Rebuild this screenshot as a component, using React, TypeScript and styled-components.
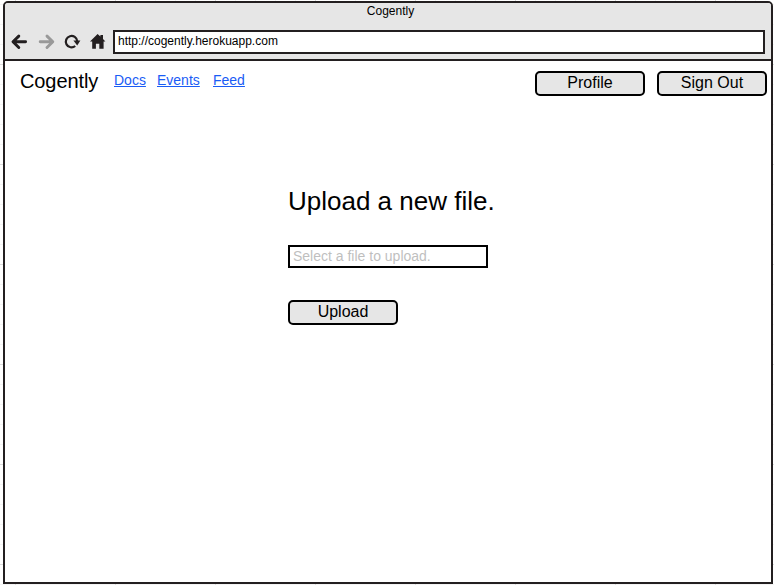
import React from "react";
import styled, { createGlobalStyle } from "styled-components";

const GlobalStyle = createGlobalStyle`
  * { box-sizing: border-box; }
  body {
    margin: 0;
    background: #fff;
    color: #000;
    font-family: "Liberation Sans", Arial, Helvetica, sans-serif;
    overflow: hidden;
  }
`;

const Canvas = styled.div`
  width: 774px;
  height: 585px;
  padding: 1px 1px 1px 3px;
  background-color: #fff;
  background-image:
    linear-gradient(90deg, #dcdcdc 1px, transparent 1px),
    linear-gradient(#dcdcdc 1px, transparent 1px),
    linear-gradient(90deg, #f4f4f4 1px, transparent 1px),
    linear-gradient(#f4f4f4 1px, transparent 1px);
  background-size: 100px 100px, 100px 100px, 20px 20px, 20px 20px;
  background-position: 15px 0, 0 64px, 15px 0, 0 4px;
`;

const BrowserWindow = styled.div`
  display: flex;
  flex-direction: column;
  width: 770px;
  height: 583px;
  border: 2px solid #231f20;
  border-radius: 5px 5px 0 0;
  background: #fff;
  overflow: hidden;
`;

const Chrome = styled.header`
  height: 58px;
  flex: none;
  background: #e6e6e6;
  border-bottom: 2px solid #231f20;
`;

const TitleBar = styled.div`
  height: 27px;
  padding-top: 1px;
  padding-left: 5px;
  font-size: 12px;
  line-height: 14px;
  text-align: center;
`;

const Toolbar = styled.div`
  display: flex;
  height: 24px;
  padding-right: 6px;
`;

const NavIcons = styled.svg`
  width: 108px;
  height: 24px;
  flex: none;
`;

const AddressBar = styled.div`
  flex: 1;
  padding-left: 3px;
  border: 2px solid #231f20;
  background: #fff;
  font-size: 12px;
  line-height: 19px;
`;

const SiteHeader = styled.div`
  display: flex;
  align-items: flex-start;
  height: 35px;
  padding: 10px 4px 0 15px;
`;

const Brand = styled.div`
  width: 94px;
  font-size: 20px;
  line-height: 20px;
  letter-spacing: -0.1px;
`;

const Links = styled.nav`
  display: flex;
  flex: 1;
  gap: 11px;
  padding-top: 1px;
`;

const NavLink = styled.a<{ $width: number }>`
  width: ${(p) => p.$width}px;
  color: #1a5cf5;
  font-size: 14px;
  line-height: 17px;
  text-decoration: underline;
  text-decoration-thickness: 1px;
  text-underline-offset: 1px;
  white-space: nowrap;
`;

const Actions = styled.div`
  display: flex;
  gap: 12px;
`;

const Button = styled.button`
  display: block;
  width: 110px;
  height: 25px;
  padding: 0 0 2px;
  border: 2px solid #000;
  border-radius: 5px;
  background: #e6e6e6;
  color: #000;
  font: 16px/19px "Liberation Sans", Arial, sans-serif;
`;

const UploadForm = styled.form`
  display: flex;
  flex-direction: column;
  align-items: flex-start;
  margin: 90px 0 0 283px;
`;

const Heading = styled.h1`
  margin: 0 0 28px;
  font-size: 26px;
  line-height: 31px;
  font-weight: 400;
  white-space: nowrap;
`;

const FileField = styled.input`
  width: 200px;
  height: 23px;
  margin: 0 0 32px;
  padding: 0 0 1px 3px;
  border: 2px solid #000;
  border-radius: 0;
  outline: none;
  background: #fff;
  font: 14px/18px "Liberation Sans", Arial, sans-serif;
  &::placeholder { color: #bfbfbf; opacity: 1; }
`;

export default function App() {
  return (
    <>
      <GlobalStyle />
      <Canvas>
        <BrowserWindow>
          <Chrome>
            <TitleBar>Cogently</TitleBar>
            <Toolbar>
              <NavIcons viewBox="5 30 108 24" fill="none" strokeWidth="2.9">
                <g stroke="#231f20" strokeLinecap="round" strokeLinejoin="round">
                  <path d="M25.6 41.8H13.2M18.8 36.1L13 41.8L18.8 47.5" />
                </g>
                <g stroke="#999" strokeLinecap="round" strokeLinejoin="round">
                  <path d="M40.2 41.8H52.6M47 36.1L52.8 41.8L47 47.5" />
                </g>
                <path d="M75.2 46A5.7 5.7 0 1 1 77.2 41.2" stroke="#231f20" strokeWidth="2.2" />
                <path d="M73.4 40.5H80.4L77.2 45.5Z" fill="#231f20" />
                <path
                  d="M97.6 34L100.4 36.6V35H103V39L105.4 41.6H103.6V48.8H99.3V43.8H95.9V48.8H92.2V41.6H90Z"
                  fill="#231f20"
                />
              </NavIcons>
              <AddressBar>http://cogently.herokuapp.com</AddressBar>
            </Toolbar>
          </Chrome>
          <SiteHeader>
            <Brand>Cogently</Brand>
            <Links>
              <NavLink $width={32}>Docs</NavLink>
              <NavLink $width={45}>Events</NavLink>
              <NavLink $width={32}>Feed</NavLink>
            </Links>
            <Actions>
              <Button>Profile</Button>
              <Button>Sign Out</Button>
            </Actions>
          </SiteHeader>
          <UploadForm onSubmit={(e) => e.preventDefault()}>
            <Heading>Upload a new file.</Heading>
            <FileField placeholder="Select a file to upload." />
            <Button>Upload</Button>
          </UploadForm>
        </BrowserWindow>
      </Canvas>
    </>
  );
}
